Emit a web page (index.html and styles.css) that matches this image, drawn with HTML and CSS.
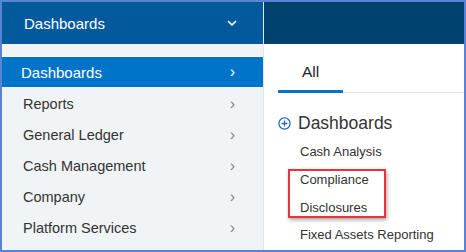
FILE: index.html
```html
<!DOCTYPE html>
<html lang="en">
<head>
  <meta charset="UTF-8">
  <title>Dashboards Menu</title>
  <link rel="stylesheet" href="styles.css">
</head>
<body>
  <div class="frame">
    <div class="sidebar">
      <div class="menu-head">
        <span>Dashboards</span>
        <svg class="chev-down" width="10" height="6" viewBox="0 0 10 6"><path d="M1 1l4 4 4-4" fill="none" stroke="#fff" stroke-width="1.6"/></svg>
      </div>
      <div class="strip"></div>
      <ul class="menu">
        <li class="active">Dashboards <span class="chev">&rsaquo;</span></li>
        <li>Reports <span class="chev">&rsaquo;</span></li>
        <li>General Ledger <span class="chev">&rsaquo;</span></li>
        <li>Cash Management <span class="chev">&rsaquo;</span></li>
        <li>Company <span class="chev">&rsaquo;</span></li>
        <li>Platform Services <span class="chev">&rsaquo;</span></li>
      </ul>
    </div>
    <div class="panel">
      <div class="panel-head"></div>
      <div class="tabs">
        <div class="tab on">All</div>
      </div>
      <div class="group">
        <h3>
          <svg width="13" height="13" viewBox="0 0 13 13"><circle cx="6.5" cy="6.5" r="5.6" fill="none" stroke="#1f6fc5" stroke-width="1.3"/><path d="M6.5 3.6v5.8M3.6 6.5h5.8" stroke="#1f6fc5" stroke-width="1.3"/></svg>
          Dashboards
        </h3>
        <div class="item">Cash Analysis</div>
        <div class="marked">
          <div class="item first">Compliance</div>
          <div class="item second">Disclosures</div>
        </div>
        <div class="item last">Fixed Assets Reporting</div>
      </div>
    </div>
  </div>
</body>
</html>
```

FILE: styles.css
```css
body {
  margin: 0;
  font-family: "Liberation Sans", Arial, sans-serif;
}

.frame {
  width: 466px;
  height: 252px;
  box-sizing: border-box;
  border: 2px solid #5b83d4;
  display: flex;
  overflow: hidden;
}

.sidebar {
  width: 261px;
  background-color: #f1f4f6;
  border-right: 1px solid #e2e6ea;
}

.menu-head {
  height: 42px;
  background-color: #005a9c;
  color: #fff;
  font-size: 15px;
  display: flex;
  align-items: center;
  justify-content: space-between;
  padding: 0 26px 0 22px;
}

.strip {
  height: 12px;
  background-color: #f1f4f6;
  border-bottom: 1px solid #fff;
}

.menu {
  list-style: none;
  margin: 0;
  padding: 0;
}

.menu li {
  height: 31px;
  display: flex;
  align-items: center;
  justify-content: space-between;
  padding: 0 28px 0 21px;
  font-size: 14.5px;
  color: #333;
}

.menu li.active {
  height: 30px;
  background-color: #0074c8;
  color: #fff;
  font-size: 15px;
  padding-left: 19px;
  margin-bottom: 1px;
}

.chev {
  font-size: 16px;
  color: #888;
}

.menu li.active .chev {
  color: #fff;
}

.panel {
  flex: 1;
  background-color: #fff;
}

.panel-head {
  height: 42px;
  background-color: #00426f;
}

.tabs {
  margin-left: 14px;
  border-bottom: 1px solid #e3e6e9;
  display: flex;
  height: 48px;
}

.tab {
  width: 65px;
  box-sizing: border-box;
  text-align: center;
  padding-top: 19px;
  font-size: 15.5px;
  color: #222;
}

.tab.on {
  border-bottom: 3px solid #0a72c8;
  margin-bottom: -1px;
}

.group {
  padding: 20px 0 0 14px;
}

.group h3 {
  margin: 0 0 4px;
  font-size: 17.5px;
  font-weight: normal;
  color: #333;
  display: flex;
  align-items: center;
  gap: 7px;
}

.item {
  font-size: 13px;
  color: #333;
  padding-left: 22px;
  height: 27px;
  line-height: 27px;
}

.marked {
  width: 98px;
  height: 49px;
  margin: 4px 0 0 10px;
  box-sizing: border-box;
  border: 2px solid #e8333b;
  box-shadow: 1px 2px 4px rgba(0, 0, 0, 0.35);
}

.marked .item {
  padding-left: 10px;
}

.marked .first {
  height: 18px;
  line-height: 18px;
}

.marked .second {
  margin-top: 11px;
  height: 16px;
  line-height: 16px;
}

.item.last {
  margin-top: 3px;
  height: 28px;
  line-height: 28px;
}
```
